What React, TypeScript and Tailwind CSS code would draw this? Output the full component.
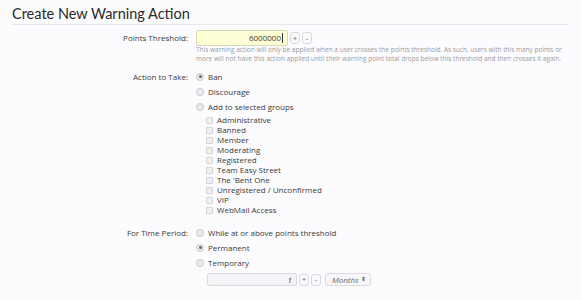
const groups = [
  "Administrative",
  "Banned",
  "Member",
  "Moderating",
  "Registered",
  "Team Easy Street",
  "The 'Bent One",
  "Unregistered / Unconfirmed",
  "VIP",
  "WebMail Access",
];

function Radio({ checked }: { checked?: boolean }) {
  return (
    <span className="flex h-[8px] w-[8px] shrink-0 items-center justify-center rounded-full border border-[#c8c8cc] bg-[#ececef]">
      {checked && <span className="h-[3px] w-[3px] rounded-full bg-[#666]" />}
    </span>
  );
}

function Check() {
  return <span className="h-[7px] w-[7px] shrink-0 rounded-[1px] border border-[#d4d4d8] bg-[#f0f0f2]" />;
}

function SpinButton({ label }: { label: string }) {
  return (
    <span className="flex h-[12px] w-[10px] items-center justify-center rounded-[3px] border border-[#d8d8de] bg-[#fafafc] text-[7px] leading-none text-[#555]">
      {label}
    </span>
  );
}

function RadioRow({ label, checked }: { label: string; checked?: boolean }) {
  return (
    <div className="flex h-[15px] items-center gap-[4px]">
      <Radio checked={checked} />
      <span>{label}</span>
    </div>
  );
}

export default function App() {
  return (
    <div
      className="h-[300px] w-[581px] overflow-hidden bg-[#fcfcfe] text-[8px] text-[#3a3a3a]"
      style={{ fontFamily: "'Open Sans', 'DejaVu Sans', sans-serif" }}
    >
      <div className="px-[12px] pt-[5px]">
        <h1 className="h-[18px] text-[14.5px] leading-[18px] text-[#2a2a2a]" style={{ fontFamily: "Lato, sans-serif" }}>
          Create New Warning Action
        </h1>
        <div className="mt-[1px] border-b border-[#e6e8ee]" />
      </div>

      <div className="grid grid-cols-[188px_1fr] gap-x-[8px] pt-[5px]">
        <div className="flex h-[16px] items-center justify-end">Points Threshold:</div>
        <div>
          <div className="flex items-center gap-[2px]">
            <div className="flex h-[16px] w-[92px] items-center justify-end rounded-[2px] border border-[#d6d6b8] bg-[#ffffd6] pr-[4px]">
              6000000
              <span className="ml-[1px] h-[10px] w-px bg-[#333]" />
            </div>
            <SpinButton label="+" />
            <SpinButton label="-" />
          </div>
          <p className="-mt-[1px] w-[375px] text-[6.5px] leading-[9px] text-[#9a9a9e]">
            This warning action will only be applied when a user crosses the points threshold. As such, users with this many points or more will not have this action applied until their warning point total drops below this threshold and then crosses it again.
          </p>
        </div>

        <div className="mt-[6px] flex h-[15px] items-center justify-end">Action to Take:</div>
        <div className="mt-[6px]">
          <RadioRow label="Ban" checked />
          <RadioRow label="Discourage" />
          <RadioRow label="Add to selected groups" />
          <div className="pl-[10px] pt-[1px]">
            {groups.map((g) => (
              <div key={g} className="flex h-[10px] items-center gap-[4px]">
                <Check />
                <span>{g}</span>
              </div>
            ))}
          </div>
        </div>

        <div className="mt-[10px] flex h-[15px] items-center justify-end">For Time Period:</div>
        <div className="mt-[10px]">
          <RadioRow label="While at or above points threshold" />
          <RadioRow label="Permanent" checked />
          <RadioRow label="Temporary" />
          <div className="flex items-center gap-[2px] pl-[11px] pt-[3px]">
            <div className="flex h-[13px] w-[90px] items-center justify-end rounded-[2px] border border-[#dadade] bg-[#f4f4f6] pr-[4px] italic">
              1
            </div>
            <SpinButton label="+" />
            <SpinButton label="-" />
            <div className="ml-[2px] flex h-[13px] w-[46px] items-center justify-between rounded-[3px] border border-[#dadade] bg-[#f8f8fa] pl-[6px] pr-[4px] italic text-[#666]">
              <span>Months</span>
              <span className="text-[6px] not-italic">⬍</span>
            </div>
          </div>
        </div>
      </div>

      <div className="mt-[14px] border-b border-[#e2e4ea]" />
    </div>
  );
}
